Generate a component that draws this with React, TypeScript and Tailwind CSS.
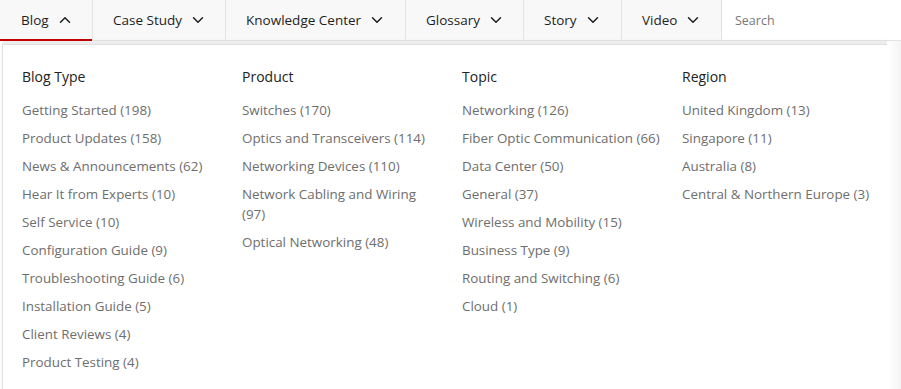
import { ChevronDown, ChevronUp } from "lucide-react";

const tabs = [
  { label: "Blog", open: true, w: "w-[93px]" },
  { label: "Case Study", open: false, w: "w-[133px]" },
  { label: "Knowledge Center", open: false, w: "w-[180px]" },
  { label: "Glossary", open: false, w: "w-[118px]" },
  { label: "Story", open: false, w: "w-[98px]" },
  { label: "Video", open: false, w: "w-[100px]" },
];

const columns = [
  {
    title: "Blog Type",
    items: [
      "Getting Started (198)",
      "Product Updates (158)",
      "News & Announcements (62)",
      "Hear It from Experts (10)",
      "Self Service (10)",
      "Configuration Guide (9)",
      "Troubleshooting Guide (6)",
      "Installation Guide (5)",
      "Client Reviews (4)",
      "Product Testing (4)",
    ],
  },
  {
    title: "Product",
    items: [
      "Switches (170)",
      "Optics and Transceivers (114)",
      "Networking Devices (110)",
      "Network Cabling and Wiring (97)",
      "Optical Networking (48)",
    ],
  },
  {
    title: "Topic",
    items: [
      "Networking (126)",
      "Fiber Optic Communication (66)",
      "Data Center (50)",
      "General (37)",
      "Wireless and Mobility (15)",
      "Business Type (9)",
      "Routing and Switching (6)",
      "Cloud (1)",
    ],
  },
  {
    title: "Region",
    items: [
      "United Kingdom (13)",
      "Singapore (11)",
      "Australia (8)",
      "Central & Northern Europe (3)",
    ],
  },
];

export default function App() {
  return (
    <div className="w-[901px] h-[389px] overflow-hidden bg-white font-['Open_Sans',sans-serif]">
      {/* Nav bar */}
      <div className="flex h-[41px] border-b border-[#e3e3e3] bg-[#f8f8f8]">
        {tabs.map((t, i) => (
          <div
            key={t.label}
            className={`relative flex shrink-0 items-center gap-[7px] border-r border-[#e3e3e3] text-[13.5px] text-[#1e1e1e] ${t.w} ${
              i === 0 ? "pl-[21px]" : "pl-[20px]"
            }`}
          >
            <span>{t.label}</span>
            {t.open ? (
              <ChevronUp size={18} strokeWidth={2} />
            ) : (
              <ChevronDown size={18} strokeWidth={2} />
            )}
            {t.open && (
              <div className="absolute bottom-[-1px] left-0 right-0 h-[2px] bg-[#c00000]" />
            )}
          </div>
        ))}
        <div className="flex flex-1 items-center bg-white pl-[13px] pt-[2px] text-[12.5px] text-[#777]">
          Search
        </div>
      </div>

      {/* Dropdown panel */}
      <div className="flex h-full bg-[#f2f2f2]">
        <div className="w-[2px] shrink-0 bg-white" />
        <div className="mt-[3px] flex w-[885px] shrink-0 border-l border-t border-[#e0e0e0] bg-white pl-[19px] pt-[22px] shadow-[2px_0_8px_rgba(0,0,0,0.06)]">
          {columns.map((c) => (
            <div key={c.title} className="w-[220px] shrink-0 pr-[20px]">
              <div className="text-[14px] font-medium leading-[20px] text-[#222]">{c.title}</div>
              <ul className="mt-[13px] flex flex-col gap-[8px]">
                {c.items.map((it) => (
                  <li key={it} className="text-[13.4px] leading-[20px] text-[#6e6e6e]">
                    {it}
                  </li>
                ))}
              </ul>
            </div>
          ))}
        </div>
        <div className="flex-1 bg-gradient-to-r from-white to-[#f4f4f4]" />
      </div>
    </div>
  );
}
